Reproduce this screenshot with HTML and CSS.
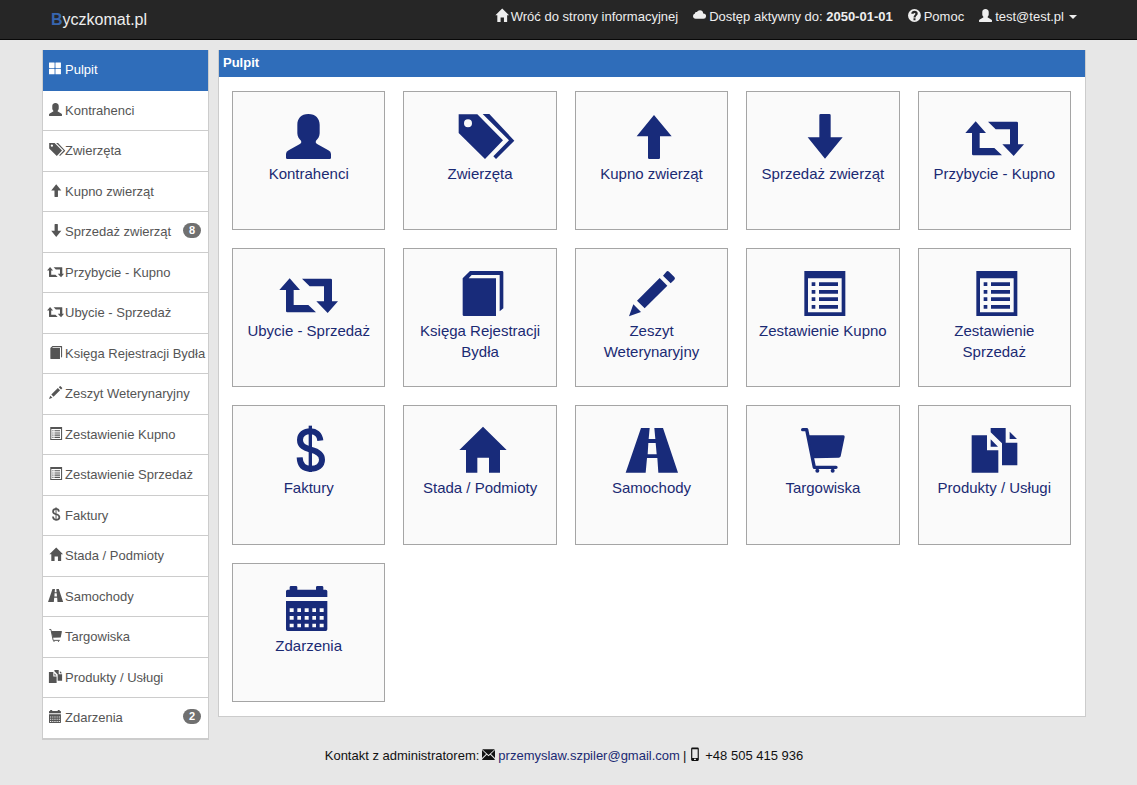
FILE: index.html
```html
<!DOCTYPE html>
<html lang="pl">
<head>
<meta charset="utf-8">
<title>Byczkomat.pl</title>
<link rel="stylesheet" href="styles.css">
</head>
<body>
<svg class="sprite" aria-hidden="true">
  <defs>
    <g id="grid"><path d="M4 5H54Q58 5 58 9V58Q58 62 54 62H4Q0 62 0 58V9Q0 5 4 5ZM71 5H120Q124 5 124 9V58Q124 62 120 62H71Q67 62 67 58V9Q67 5 71 5ZM4 71H54Q58 71 58 75V124Q58 128 54 128H4Q0 128 0 124V75Q0 71 4 71ZM71 71H120Q124 71 124 75V124Q124 128 120 128H71Q67 128 67 124V75Q67 71 71 71Z"/></g>
    <g id="user"><path d="M67 0C45 0 34 14 34 32V58C34 68 40 76 45 80Q48 85 43 89L8 109Q0 113 0 120V131Q0 135 4 135H131Q135 135 135 131V120Q135 113 127 109L92 89Q87 85 90 80C95 76 101 68 101 58V32C101 14 89 0 67 0Z"/></g>
    <g id="tags"><path fill-rule="evenodd" d="M2 1H58L135 79L81 135L2 57ZM30 16A12 12 0 1 0 30 40A12 12 0 1 0 30 16Z"/><path d="M74 0H94L169 80L114 135L106 127L153 79Z"/></g>
    <g id="up"><path d="M75 3L128 67H93V131Q93 135 89 135H61Q57 135 57 131V67H23Z"/></g>
    <g id="down"><path d="M75 134L128 70H92V4Q92 0 88 0H62Q58 0 58 4V70H23Z"/></g>
    <g id="retweet"><path d="M11 22L42 57H23V102H67L90 124H4Q0 124 0 120V57H-20ZM48 23H134Q138 23 138 27V91H156L125 126L91 91H114V46H71Z"/></g>
    <g id="book"><path d="M14 22L36 0H132Q136 0 136 4V112L125 121V12H41L32 22H114V135H18Q14 135 14 131Z"/></g>
    <g id="pencil"><path d="M0 136L13 100L36 123ZM24 89L92 21L115 44L47 112ZM102 14L112 2Q116 -2 120 2L136 18Q140 22 136 26L125 37Z"/></g>
    <g id="list"><path fill-rule="evenodd" d="M13 0H136V135H13ZM24 22V124H125V22Z"/><path d="M35 34H46V45H35ZM57 34H114V45H57ZM35 57H46V68H35ZM57 57H114V68H57ZM35 79H46V90H35ZM57 79H114V90H57ZM35 102H46V113H35ZM57 102H114V113H57Z"/></g>
    <g id="money"><path class="stroke-wide" d="M103 38C101 18 88 10 74 10C54 10 42 20 42 36C42 54 56 60 74 65C94 70 108 78 108 95C108 112 94 122 74 122C54 122 42 112 41 88"/><path d="M68 -7H78V132H68Z"/></g>
    <g id="home"><path d="M75 -4L146 66H126V134H93V89H58V134H24V66H4Z"/></g>
    <g id="road"><path fill-rule="evenodd" d="M36 0H102L147 134H-10ZM62 0L59 33H79L76 0ZM58 45L56 79H83L80 45ZM54 90L50 134H88L85 90Z"/></g>
    <g id="cart"><path class="stroke-thin" d="M8 5H20L43 118H108"/><path d="M24 22H130Q135 22 134 27L122 85Q121 89 116 89L40 91Z"/><circle cx="52" cy="128" r="6"/><circle cx="98" cy="128" r="6"/></g>
    <g id="files"><path d="M-1 22H45V67H79V134H-1ZM56 34L78 56H56ZM56 0H101V44H136V112H90V46L56 13ZM113 11L135 33H113Z"/></g>
    <g id="calendar"><path d="M0 33V16Q0 11 5 11H11V4Q11 0 15 0H30Q34 0 34 4V11H90V4Q90 0 94 0H108Q112 0 112 4V11H119Q124 11 124 16V33Z"/><path fill-rule="evenodd" d="M0 45H124V130Q124 135 119 135H5Q0 135 0 130ZM11 67V78H23V67ZM34 67V78H45V67ZM56 67V78H68V67ZM79 67V78H90V67ZM101 67V78H113V67ZM11 90V101H23V90ZM34 90V101H45V90ZM56 90V101H68V90ZM79 90V101H90V90ZM101 90V101H113V90ZM11 113V124H23V113ZM34 113V124H45V113ZM56 113V124H68V113ZM79 113V124H90V113ZM101 113V124H113V113Z"/></g>
    <g id="cloud"><path d="M28 100Q0 98 0 72Q0 52 20 46Q22 28 40 32Q50 14 72 14Q102 16 106 46Q136 46 136 74Q134 100 108 100Z"/></g>
    <g id="help"><path fill-rule="evenodd" d="M67 0A67 67 0 1 0 67 134A67 67 0 1 0 67 0ZM57 96H78V116H57ZM34 50C36 28 48 19 68 19C88 19 101 30 101 48C101 68 80 70 79 88H57C57 66 77 64 77 50C77 38 58 38 57 50Z"/></g>
    <g id="mail"><path d="M2 12H133L68 72ZM0 22L42 62L0 104ZM135 22V104L93 62ZM50 69L68 86L86 69L132 116V124H2V116Z"/></g>
    <g id="phone"><path fill-rule="evenodd" d="M34 -4H90Q102 -4 102 8V122Q102 134 90 134H34Q22 134 22 122V8Q22 -4 34 -4ZM34 14V104H90V14ZM52 112V124H72V112Z"/></g>
  </defs>
</svg>

<header class="navbar">
  <a class="brand" href="#"><b class="brand-initial">B</b>yczkomat.pl</a>
  <nav class="nav">
    <a class="nav-link" href="#"><svg class="icon" viewBox="0 0 135 135"><use href="#home"/></svg>Wróć do strony informacyjnej</a>
    <a class="nav-link" href="#"><svg class="icon" viewBox="0 0 135 135"><use href="#cloud"/></svg><span>Dostęp aktywny do: <b>2050-01-01</b></span></a>
    <a class="nav-link" href="#"><svg class="icon" viewBox="0 0 135 135"><use href="#help"/></svg>Pomoc</a>
    <button class="nav-link" type="button"><svg class="icon" viewBox="0 0 135 135"><use href="#user"/></svg>test@test.pl<span class="caret"></span></button>
  </nav>
</header>

<div class="page">
  <nav class="sidebar">
    <a class="side-link active" href="#"><svg class="icon" viewBox="0 0 135 135"><use href="#grid"/></svg>Pulpit</a>
    <a class="side-link" href="#"><svg class="icon" viewBox="0 0 135 135"><use href="#user"/></svg>Kontrahenci</a>
    <a class="side-link" href="#"><svg class="icon" viewBox="0 0 135 135"><use href="#tags"/></svg>Zwierzęta</a>
    <a class="side-link" href="#"><svg class="icon" viewBox="0 0 135 135"><use href="#up"/></svg>Kupno zwierząt</a>
    <a class="side-link" href="#"><svg class="icon" viewBox="0 0 135 135"><use href="#down"/></svg>Sprzedaż zwierząt<span class="badge">8</span></a>
    <a class="side-link" href="#"><svg class="icon" viewBox="0 0 135 135"><use href="#retweet"/></svg>Przybycie - Kupno</a>
    <a class="side-link" href="#"><svg class="icon" viewBox="0 0 135 135"><use href="#retweet"/></svg>Ubycie - Sprzedaż</a>
    <a class="side-link" href="#"><svg class="icon" viewBox="0 0 135 135"><use href="#book"/></svg>Księga Rejestracji Bydła</a>
    <a class="side-link" href="#"><svg class="icon" viewBox="0 0 135 135"><use href="#pencil"/></svg>Zeszyt Weterynaryjny</a>
    <a class="side-link" href="#"><svg class="icon" viewBox="0 0 135 135"><use href="#list"/></svg>Zestawienie Kupno</a>
    <a class="side-link" href="#"><svg class="icon" viewBox="0 0 135 135"><use href="#list"/></svg>Zestawienie Sprzedaż</a>
    <a class="side-link" href="#"><svg class="icon" viewBox="0 0 135 135"><use href="#money"/></svg>Faktury</a>
    <a class="side-link" href="#"><svg class="icon" viewBox="0 0 135 135"><use href="#home"/></svg>Stada / Podmioty</a>
    <a class="side-link" href="#"><svg class="icon" viewBox="0 0 135 135"><use href="#road"/></svg>Samochody</a>
    <a class="side-link" href="#"><svg class="icon" viewBox="0 0 135 135"><use href="#cart"/></svg>Targowiska</a>
    <a class="side-link" href="#"><svg class="icon" viewBox="0 0 135 135"><use href="#files"/></svg>Produkty / Usługi</a>
    <a class="side-link" href="#"><svg class="icon" viewBox="0 0 135 135"><use href="#calendar"/></svg>Zdarzenia<span class="badge">2</span></a>
  </nav>

  <main class="panel">
    <h1 class="panel-title">Pulpit</h1>
    <div class="tiles">
      <a class="tile" href="#"><svg class="tile-icon" viewBox="0 0 135 135"><use href="#user"/></svg><span>Kontrahenci</span></a>
      <a class="tile" href="#"><svg class="tile-icon" viewBox="0 0 135 135"><use href="#tags"/></svg><span>Zwierzęta</span></a>
      <a class="tile" href="#"><svg class="tile-icon" viewBox="0 0 135 135"><use href="#up"/></svg><span>Kupno zwierząt</span></a>
      <a class="tile" href="#"><svg class="tile-icon" viewBox="0 0 135 135"><use href="#down"/></svg><span>Sprzedaż zwierząt</span></a>
      <a class="tile" href="#"><svg class="tile-icon" viewBox="0 0 135 135"><use href="#retweet"/></svg><span>Przybycie - Kupno</span></a>
      <a class="tile" href="#"><svg class="tile-icon" viewBox="0 0 135 135"><use href="#retweet"/></svg><span>Ubycie - Sprzedaż</span></a>
      <a class="tile" href="#"><svg class="tile-icon" viewBox="0 0 135 135"><use href="#book"/></svg><span>Księga Rejestracji Bydła</span></a>
      <a class="tile" href="#"><svg class="tile-icon" viewBox="0 0 135 135"><use href="#pencil"/></svg><span>Zeszyt Weterynaryjny</span></a>
      <a class="tile" href="#"><svg class="tile-icon" viewBox="0 0 135 135"><use href="#list"/></svg><span>Zestawienie Kupno</span></a>
      <a class="tile" href="#"><svg class="tile-icon" viewBox="0 0 135 135"><use href="#list"/></svg><span>Zestawienie Sprzedaż</span></a>
      <a class="tile" href="#"><svg class="tile-icon" viewBox="0 0 135 135"><use href="#money"/></svg><span>Faktury</span></a>
      <a class="tile" href="#"><svg class="tile-icon" viewBox="0 0 135 135"><use href="#home"/></svg><span>Stada / Podmioty</span></a>
      <a class="tile" href="#"><svg class="tile-icon" viewBox="0 0 135 135"><use href="#road"/></svg><span>Samochody</span></a>
      <a class="tile" href="#"><svg class="tile-icon" viewBox="0 0 135 135"><use href="#cart"/></svg><span>Targowiska</span></a>
      <a class="tile" href="#"><svg class="tile-icon" viewBox="0 0 135 135"><use href="#files"/></svg><span>Produkty / Usługi</span></a>
      <a class="tile" href="#"><svg class="tile-icon" viewBox="0 0 135 135"><use href="#calendar"/></svg><span>Zdarzenia</span></a>
    </div>
  </main>
</div>

<footer class="footer">
  <span>Kontakt z administratorem:</span>
  <svg class="icon" viewBox="0 0 135 135"><use href="#mail"/></svg>
  <a class="mail-link" href="mailto:przemyslaw.szpiler@gmail.com">przemyslaw.szpiler@gmail.com</a>
  <span>|</span>
  <svg class="icon" viewBox="0 0 135 135"><use href="#phone"/></svg>
  <span>+48 505 415 936</span>
</footer>
</body>
</html>
```

FILE: styles.css
```css
* {
  box-sizing: border-box;
}

body {
  margin: 0;
  background: #e7e7e7;
  color: #111;
  font-family: "Liberation Sans", Arial, sans-serif;
  font-size: 13px;
  line-height: 1.5;
}

a {
  color: inherit;
  text-decoration: none;
}

.sprite {
  display: none;
}

.icon {
  flex: none;
  width: 13px;
  height: 13px;
  margin-bottom: 2px;
  fill: currentColor;
  overflow: visible;
}

.stroke-wide,
.stroke-thin {
  fill: none;
  stroke: currentColor;
  stroke-width: 18;
}

.stroke-thin {
  stroke-width: 10;
  stroke-linecap: round;
  stroke-linejoin: round;
}

.navbar {
  display: flex;
  justify-content: space-between;
  align-items: flex-start;
  height: 40px;
  padding: 0 60px 0 51px;
  background: #262626;
  border-bottom: 1px solid #080808;
  color: #eee;
}

.brand {
  padding-top: 8px;
  font-size: 16px;
}

.brand-initial {
  color: #3765ae;
}

.nav {
  display: flex;
  gap: 15px;
  padding-top: 7px;
}

.nav-link {
  display: flex;
  align-items: center;
  gap: 3px;
  padding: 0;
  border: 0;
  background: none;
  color: inherit;
  font: inherit;
}

.caret {
  margin-left: 2px;
  border: 4px solid transparent;
  border-top-color: currentColor;
  border-bottom: 0;
}

.page {
  display: grid;
  grid-template-columns: 167px 1fr;
  gap: 9px;
  align-items: start;
  padding: 10px 51px 0 42px;
}

.sidebar {
  border: 1px solid #ccc;
  border-top: 0;
  background: #fff;
  color: #555;
}

.side-link {
  display: flex;
  align-items: center;
  gap: 3px;
  padding: 10px 7px 10px 6px;
  border-bottom: 1px solid #ccc;
  white-space: nowrap;
}

.side-link.active {
  background: #2f6dba;
  border-color: #2f6dba;
  color: #fff;
}

.badge {
  min-width: 18px;
  margin-bottom: 2px;
  margin-left: auto;
  padding: 0 5px;
  border-radius: 8px;
  background: #707070;
  color: #fff;
  font-size: 11px;
  font-weight: bold;
  line-height: 15px;
  text-align: center;
}

.panel {
  border: 1px solid #ccc;
  border-top: 0;
  background: #fff;
}

.panel-title {
  margin: 0;
  padding: 3px 4px 4px;
  background: #2f6dba;
  color: #fff;
  font-size: 13px;
}

.tiles {
  display: grid;
  grid-template-columns: repeat(5, 1fr);
  gap: 18px;
  padding: 14px 14px 14px 13px;
}

.tile {
  display: flex;
  flex-direction: column;
  align-items: center;
  aspect-ratio: 11 / 10;
  padding: 22px 8px 0;
  border: 1px solid #a5a5a5;
  background: #fafafa;
  color: #1b2a73;
  font-size: 15px;
  line-height: 21px;
  text-align: center;
}

.tile-icon {
  width: 45px;
  height: 45px;
  margin-bottom: 4px;
  fill: #182b7a;
  color: #182b7a;
  overflow: visible;
}

.footer {
  display: flex;
  justify-content: center;
  align-items: center;
  gap: 3px;
  padding: 6px 51px 20px 42px;
}

.mail-link {
  color: #1b2a73;
}
```
